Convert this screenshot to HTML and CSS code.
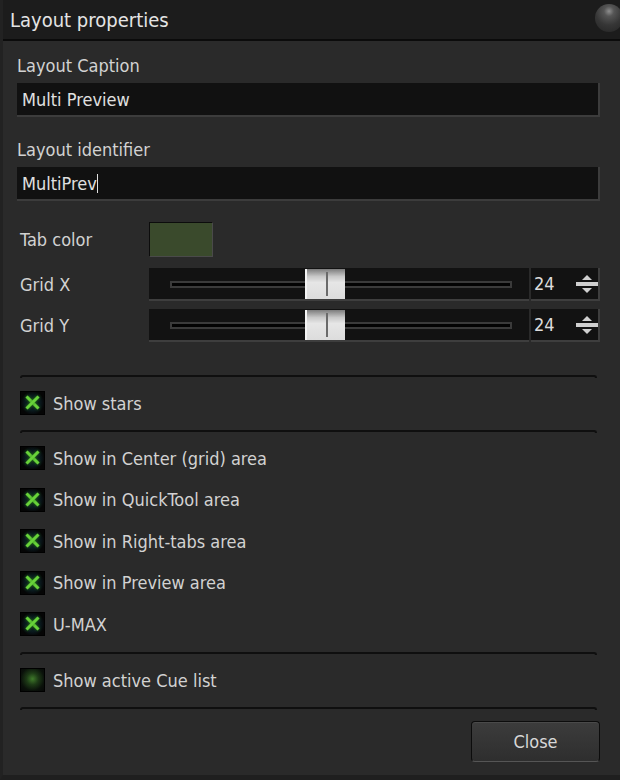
FILE: index.html
```html
<!DOCTYPE html>
<html lang="en">

<head>
    <meta charset="UTF-8">
    <meta name="viewport" content="width=device-width, initial-scale=1.0">
    <title>Layout properties</title>
    <link rel="stylesheet" href="styles.css">
</head>

<body>
    <div class="window">
        <header class="titlebar">
            <h1>Layout properties</h1>
            <span class="knob"></span>
        </header>

        <div class="content">
            <label class="field-label" for="caption">Layout Caption</label>
            <div class="textbox" id="caption">Multi Preview</div>

            <label class="field-label second" for="ident">Layout identifier</label>
            <div class="textbox" id="ident">MultiPrev<span class="caret"></span></div>

            <div class="row tab-row">
                <span class="row-label">Tab color</span>
                <span class="swatch"></span>
            </div>

            <div class="row grid-row">
                <span class="row-label">Grid X</span>
                <div class="slider">
                    <div class="groove"></div>
                    <div class="thumb"></div>
                </div>
                <div class="spin">
                    <span class="value">24</span>
                    <span class="arrows"><i class="up"></i><b></b><i class="down"></i></span>
                </div>
            </div>

            <div class="row grid-row gy">
                <span class="row-label">Grid Y</span>
                <div class="slider">
                    <div class="groove"></div>
                    <div class="thumb"></div>
                </div>
                <div class="spin">
                    <span class="value">24</span>
                    <span class="arrows"><i class="up"></i><b></b><i class="down"></i></span>
                </div>
            </div>

            <div class="sep first"></div>
            <div class="check"><span class="box on"></span>Show stars</div>
            <div class="sep"></div>

            <div class="checks">
                <div class="check"><span class="box on"></span>Show in Center (grid) area</div>
                <div class="check"><span class="box on"></span>Show in QuickTool area</div>
                <div class="check"><span class="box on"></span>Show in Right-tabs area</div>
                <div class="check"><span class="box on"></span>Show in Preview area</div>
                <div class="check"><span class="box on"></span>U-MAX</div>
            </div>

            <div class="sep"></div>
            <div class="check"><span class="box off"></span>Show active Cue list</div>
            <div class="sep"></div>

            <div class="footer">
                <button type="button">Close</button>
            </div>
        </div>
    </div>
</body>

</html>
```

FILE: styles.css
```css
body {
    margin: 0;
    background-color: #1a1a1a;
    font-family: "DejaVu Sans Condensed", "Liberation Sans", sans-serif;
    color: #d2d2d2;
}

.window {
    width: 620px;
    height: 780px;
    background-color: #2a2a2a;
    box-sizing: border-box;
    border-left: 3px solid #222;
    border-bottom: 5px solid #1f1f1f;
    overflow: hidden;
}

.titlebar {
    height: 39px;
    margin-left: -3px;
    background-color: #1c1c1c;
    border-bottom: 2px solid #0b0b0b;
    display: flex;
    align-items: center;
    justify-content: space-between;
}

.titlebar h1 {
    margin: 0 0 0 10px;
    font-size: 20px;
    font-weight: normal;
    color: #e4e4e4;
}

.knob {
    width: 28px;
    height: 28px;
    margin-right: -3px;
    margin-top: -4px;
    border-radius: 50%;
    background: radial-gradient(circle at 50% 26%, #8e8e8e 0, #555 20%, #363636 55%, #242424 100%);
}

.content {
    padding: 0 20px 0 14px;
    display: flex;
    flex-direction: column;
}

.field-label {
    font-size: 18px;
    line-height: 20px;
    margin-top: 15px;
    margin-bottom: 7px;
}

.field-label.second {
    margin-top: 23px;
}

.textbox {
    height: 34px;
    box-sizing: border-box;
    background-color: #111;
    border-right: 2px solid #3c3c3c;
    border-bottom: 2px solid #3c3c3c;
    padding: 6px 0 0 5px;
    font-size: 18px;
    color: #e0e0e0;
}

.caret {
    display: inline-block;
    width: 1px;
    height: 19px;
    background-color: #e0e0e0;
    vertical-align: -3px;
}

.row {
    display: flex;
    align-items: center;
}

.row-label {
    width: 129px;
    font-size: 18px;
    padding-left: 3px;
}

.tab-row {
    margin-top: 21px;
}

.swatch {
    width: 62px;
    height: 33px;
    background-color: #3a4a2c;
    border: 1px solid #0c0c0c;
    border-right-color: #4a4a4a;
    border-bottom-color: #4a4a4a;
}

.grid-row {
    margin-top: 11px;
    height: 33px;
}

.grid-row.gy {
    margin-top: 8px;
}

.slider {
    position: relative;
    width: 380px;
    height: 33px;
    box-sizing: border-box;
    background-color: #121212;
    border-bottom: 2px solid #3e3e3e;
    margin-right: 2px;
}

.groove {
    position: absolute;
    left: 21px;
    right: 17px;
    top: 13px;
    height: 7px;
    box-sizing: border-box;
    background-color: #020202;
    border: 2px solid #3a3a3a;
}

.thumb {
    position: absolute;
    left: 156px;
    top: 1px;
    width: 40px;
    height: 30px;
    box-sizing: border-box;
    border-left: 2px solid #f4f4f4;
    background: linear-gradient(#7c7c7c 0, #c8c8c8 25%, #e6e6e6 45%, #dcdcdc 100%);
}

.thumb::after {
    content: "";
    position: absolute;
    left: 19px;
    top: 3px;
    width: 2px;
    height: 24px;
    background-color: #6a6a6a;
}

.spin {
    flex: 1;
    height: 33px;
    box-sizing: border-box;
    background-color: #121212;
    border-bottom: 2px solid #3e3e3e;
    border-right: 2px solid #3e3e3e;
    display: flex;
    align-items: center;
    justify-content: space-between;
}

.value {
    font-size: 18px;
    padding-left: 3px;
    color: #dcdcdc;
}

.arrows {
    display: flex;
    flex-direction: column;
    align-items: center;
    width: 22px;
}

.arrows i {
    width: 0;
    height: 0;
    border-left: 5px solid transparent;
    border-right: 5px solid transparent;
}

.arrows .up {
    border-bottom: 5px solid #d0d0d0;
}

.arrows .down {
    border-top: 5px solid #d0d0d0;
}

.arrows b {
    width: 22px;
    height: 4px;
    margin: 2px 0;
    background-color: #cfcfcf;
}

.sep {
    height: 1px;
    margin: 0 3px 0 3px;
    border: 2px solid #0f0f0f;
    border-bottom: none;
    border-radius: 3px 3px 0 0;
}

.sep.first {
    margin-top: 33px;
}

.check {
    display: flex;
    align-items: center;
    gap: 8px;
    height: 24px;
    margin: 13px 0 15px 3px;
    font-size: 18px;
}

.checks {
    display: flex;
    flex-direction: column;
    gap: 17.5px;
    margin: 13px 0 16px;
}

.checks .check {
    margin-top: 0;
    margin-bottom: 0;
}

.box {
    width: 25px;
    height: 24px;
    box-sizing: border-box;
    border: 1px solid #000;
    background-color: #060606;
    position: relative;
}

.box.on {
    background: radial-gradient(circle, #0d2418 0, #0a1a20 45%, #050505 75%);
}

.box.on::before,
.box.on::after {
    content: "";
    position: absolute;
    left: 3px;
    top: 9px;
    width: 17px;
    height: 3px;
    background-color: #68d23a;
    box-shadow: 0 0 3px #2c8a1a;
    transform: rotate(45deg);
}

.box.on::after {
    transform: rotate(-45deg);
}

.box.off {
    background: radial-gradient(circle at 50% 45%, #3f7a2a 0, #1d3a16 35%, #0a110a 70%, #060606 100%);
}

.footer {
    display: flex;
    justify-content: flex-end;
    margin-top: 11px;
}

button {
    width: 129px;
    height: 41px;
    font-family: inherit;
    font-size: 18px;
    color: #d8d8d8;
    background: linear-gradient(#3c3c3c, #2e2e2e);
    border: 1px solid #0c0c0c;
    border-bottom-color: #555;
    border-radius: 4px;
    box-shadow: inset 0 1px 0 #4a4a4a;
    cursor: pointer;
}
```
